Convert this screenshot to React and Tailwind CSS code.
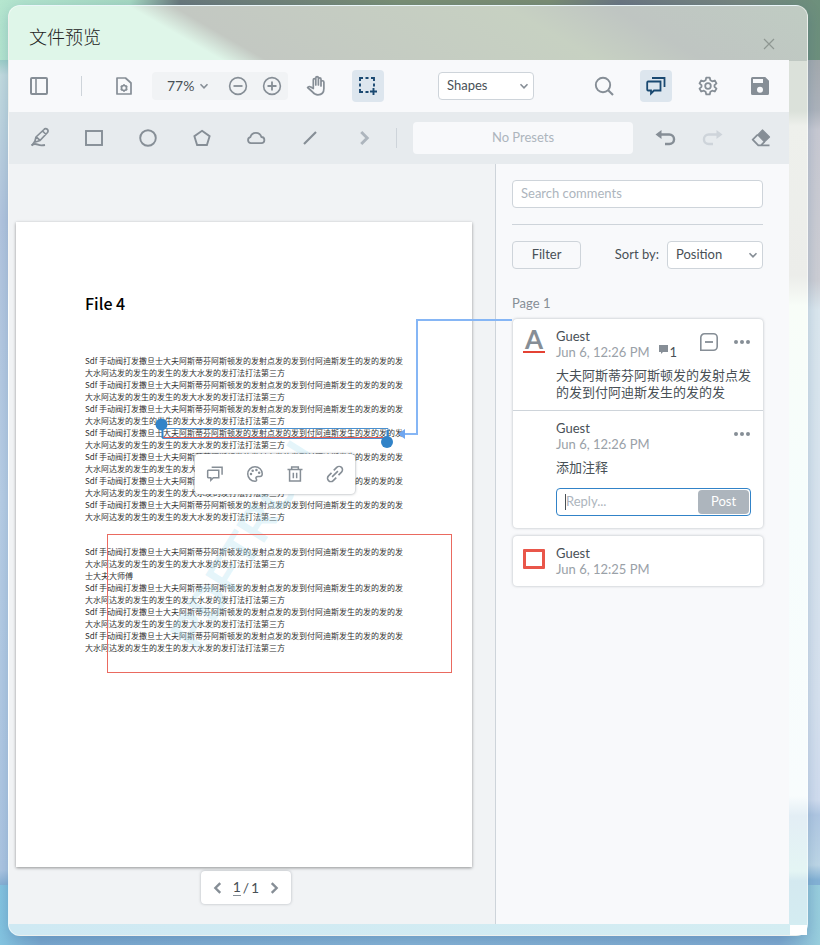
import React from "react";

const longLine = "Sdf 手动阀打发撒旦士大夫阿斯蒂芬阿斯顿发的发射点发的发到付阿迪斯发生的发的发的发";
const shortLine = "大水阿达发的发生的发生的发大水发的发打法打法第三方";
const firstBlock = Array.from({ length: 7 }, () => [longLine, shortLine]).flat();
const secondBlock = [longLine, shortLine, "士大夫大师傅", longLine, shortLine, longLine, shortLine, longLine, shortLine];

function Icon({ size = 24, children, className = "" }) {
  return (
    <svg
      width={size}
      height={size}
      viewBox="0 0 24 24"
      fill="none"
      stroke="currentColor"
      strokeWidth="2"
      className={`shrink-0 ${className}`}
      aria-hidden="true"
    >
      {children}
    </svg>
  );
}

const PanelIcon = () => (
  <Icon>
    <rect x="4" y="4" width="16" height="16" rx="1" />
    <path d="M9 4v16" strokeWidth="1.6" />
  </Icon>
);
const PageGearIcon = () => (
  <Icon>
    <path d="M5 4h8.5L19 9v11H5z" strokeWidth="1.7" strokeLinejoin="round" />
    <circle cx="12" cy="14" r="2.5" strokeWidth="1.6" />
    <path d="M12 10.2v1M12 16.8v1M8.7 12.1l.9.5M14.4 15.4l.9.5M8.7 15.9l.9-.5M14.4 12.6l.9-.5" strokeWidth="1.8" />
  </Icon>
);
const MinusCircle = () => (
  <Icon>
    <circle cx="12" cy="12" r="8.4" strokeWidth="1.6" />
    <path d="M7.5 12h9" strokeWidth="1.8" />
  </Icon>
);
const PlusCircle = () => (
  <Icon>
    <circle cx="12" cy="12" r="8.4" strokeWidth="1.6" />
    <path d="M7.5 12h9M12 7.5v9" strokeWidth="1.8" />
  </Icon>
);
const HandIcon = () => (
  <Icon>
    <path
      d="M9.3 14.6V5.8a1.2 1.2 0 0 1 2.5 0V11V4a1.2 1.2 0 0 1 2.6 0v7V5.2a1.2 1.2 0 0 1 2.6 0V12V8.2a1.2 1.2 0 0 1 2.9 0v6.3c0 4-2.5 6.3-6 6.3-2.6 0-4-1-5.3-2.8L3.6 13.5c.9-1.3 2.3-1.2 3.2-.4z"
      strokeWidth="1.7"
      strokeLinejoin="round"
    />
  </Icon>
);
const SelectIcon = () => (
  <Icon>
    <path d="M4 7V4h3M9.5 4h3M15 4h3v3M18 9.5v3M4 9.5v3M4 15v3h3M9.5 18h3" strokeWidth="1.9" />
    <path d="M17.5 14v7M14 17.5h7" strokeWidth="1.9" />
  </Icon>
);
const SearchIcon = () => (
  <Icon>
    <circle cx="11" cy="11" r="7.2" strokeWidth="1.9" />
    <path d="m16.2 16.2 4.8 4.8" strokeWidth="2.1" />
  </Icon>
);
const CommentsIcon = ({ size }) => (
  <Icon size={size}>
    <path d="M4 7.5h12.5v9H10l-3 3v-3H4a1 1 0 0 1-.8-1V8.5a1 1 0 0 1 .8-1z" strokeWidth="1.8" />
    <path d="M8 4h12.5v9" strokeWidth="1.8" />
  </Icon>
);
const GearIcon = () => (
  <Icon>
    <path
      d="M9.6 6.3 10.3 3.6h3.4l.7 2.7 1.8 1 2.6-.8 1.7 2.9-2 1.8v1.6l2 1.8-1.7 2.9-2.6-.8-1.8 1-.7 2.7h-3.4l-.7-2.7-1.8-1-2.600.8-1.700-2.900 2-1.800v-1.600l-2-1.800 1.700-2.900 2.600.8z"
      strokeWidth="1.8"
      strokeLinejoin="round"
    />
    <circle cx="12" cy="12" r="2.8" strokeWidth="1.8" />
  </Icon>
);
const SaveIcon = () => (
  <Icon>
    <path
      d="M4.5 3h12.7L21 6.8v12.7a1.5 1.5 0 0 1-1.5 1.5h-15A1.5 1.5 0 0 1 3 19.5v-15A1.5 1.5 0 0 1 4.5 3zM5 5v4h10V5zM12 12.8a3 3 0 1 0 0 6 3 3 0 0 0 0-6z"
      fill="currentColor"
      fillRule="evenodd"
      stroke="none"
    />
  </Icon>
);
const PenIcon = () => (
  <Icon>
    <path d="m7 15 1-4 8-7.5a2 2 0 0 1 3.5 3L12 14.5 7.5 16zM8.2 10.8l3.8 3.5M14.5 5l3.6 3.5" strokeWidth="1.7" strokeLinejoin="round" />
    <path d="M3.5 19.5c2.5-2.5 4.5-1.7 6.500-.8s4 .9 7 .3" strokeWidth="1.9" />
    <path d="m7 15-3 4.5" strokeWidth="1.7" />
  </Icon>
);
const SquareIcon = () => (
  <Icon>
    <rect x="4" y="5" width="16" height="14" strokeWidth="1.9" />
  </Icon>
);
const CircleIcon = () => (
  <Icon>
    <circle cx="12" cy="12" r="7.8" strokeWidth="1.9" />
  </Icon>
);
const PentagonIcon = () => (
  <Icon>
    <path d="m12 4.8 7.6 5.4-2.7 8.8H7.1L4.4 10.2z" strokeWidth="1.9" />
  </Icon>
);
const CloudIcon = () => (
  <Icon>
    <path d="M7 17.2a3.1 3.1 0 0 1-.6-6.1 5.7 5.7 0 0 1 11-.1 3.1 3.1 0 0 1-.3 6.2z" strokeWidth="1.8" />
  </Icon>
);
const LineIcon = () => (
  <Icon>
    <path d="M6 18 18 6" strokeWidth="2.2" />
  </Icon>
);
const ChevronRight = ({ size }) => (
  <Icon size={size}>
    <path d="m9 5.5 6.5 6.5L9 18.5" strokeWidth="3.2" />
  </Icon>
);
const ChevronLeft = ({ size }) => (
  <Icon size={size}>
    <path d="M15 5.5 8.5 12l6.5 6.5" strokeWidth="3.2" />
  </Icon>
);
const ChevronDown = ({ className }) => (
  <Icon size={12} className={className}>
    <path d="m5 8.5 7 7 7-7" strokeWidth="3.2" />
  </Icon>
);
const UndoIcon = () => (
  <Icon>
    <path d="M7 8.5h9.3a4.2 4.2 0 0 1 0 9.5H12" strokeWidth="2.4" />
    <path d="M8.5 4v9L2.5 8.5z" fill="currentColor" stroke="none" />
  </Icon>
);
const RedoIcon = () => (
  <Icon>
    <path d="M17 8.5H7.7a4.2 4.2 0 0 0 0 9.5H12" strokeWidth="2.4" />
    <path d="M15.5 4v9l6-4.5z" fill="currentColor" stroke="none" />
  </Icon>
);
const EraserIcon = () => (
  <Icon>
    <path d="M13.5 4 20.5 11 15.5 15.8 8.7 8.9z" fill="currentColor" strokeWidth="1.2" strokeLinejoin="round" />
    <path d="m8.7 8.7-5 5 5.6 5.6H12l3.6-3.6M11 19.4h9.5" strokeWidth="1.8" strokeLinejoin="round" />
  </Icon>
);
const PaletteIcon = () => (
  <Icon size={20}>
    <path
      d="M12 3.3a8.7 8.7 0 1 0 0 17.4c2 0 2.3-1.5 1.5-2.7-.9-1.7 0-3 2-3h2.5c1.8 0 2.7-1.2 2.7-3.2 0-4.8-4-8.5-8.7-8.5z"
      strokeWidth="1.8"
    />
    <g fill="currentColor" stroke="none">
      <circle cx="7.2" cy="12" r="1.5" />
      <circle cx="9.2" cy="8" r="1.5" />
      <circle cx="13.7" cy="7.3" r="1.5" />
      <circle cx="17" cy="10.6" r="1.5" />
    </g>
  </Icon>
);
const TrashIcon = () => (
  <Icon size={20}>
    <path d="M3 6.5h18M8 6V3.5h8V6M5.5 7v13.5h13V7" strokeWidth="1.8" />
    <path d="M10 10.5v6.5M14 10.5v6.5" strokeWidth="1.8" />
  </Icon>
);
const LinkIcon = () => (
  <Icon size={20}>
    <path
      d="m10.5 7.7 3.6-3.6a4 4 0 0 1 5.7 5.7l-3.6 3.6M13.5 16.3l-3.6 3.6a4 4 0 0 1-5.7-5.7l3.6-3.6M8.5 15.5l7-7"
      strokeWidth="1.9"
    />
  </Icon>
);
const DotsIcon = () => (
  <Icon size={24}>
    <g fill="currentColor" stroke="none">
      <circle cx="6" cy="12" r="2" />
      <circle cx="12" cy="12" r="2" />
      <circle cx="18" cy="12" r="2" />
    </g>
  </Icon>
);
const StateIcon = () => (
  <Icon>
    <path d="M3.8 20.2V7.5a3.7 3.7 0 0 1 3.7-3.7h9a3.7 3.7 0 0 1 3.7 3.7v9a3.7 3.7 0 0 1-3.7 3.7z" strokeWidth="1.6" />
    <path d="M8 12h8" strokeWidth="1.8" />
  </Icon>
);

function ToolButton({ label, active, muted, children }) {
  const tone = active ? "bg-[#dde6ee] text-[#1a4971]" : muted ? "text-[#ced4da]" : "text-[#868e96]";
  return (
    <button type="button" aria-label={label} className={`flex size-8 shrink-0 items-center justify-center rounded ${tone}`}>
      {children}
    </button>
  );
}

function Dropdown({ id, label, value }) {
  return (
    <div className="relative w-24 shrink-0">
      <select
        id={id}
        aria-label={label}
        defaultValue={value}
        className="h-7 w-full appearance-none rounded border border-[#ced4da] bg-white pl-2 text-[13px] text-[#485056]"
      >
        <option>{value}</option>
      </select>
      <ChevronDown className="pointer-events-none absolute top-2 right-1 text-[#868e96]" />
    </div>
  );
}

function TopToolbar() {
  return (
    <div className="flex h-13 shrink-0 items-center justify-between bg-[#f8f9fb] pr-[13px] pl-[14px]">
      <div className="flex items-center">
        <ToolButton label="Panel"><PanelIcon /></ToolButton>
        <div className="mx-[26px] h-5 w-px bg-[#ced4da]" />
        <ToolButton label="View controls"><PageGearIcon /></ToolButton>
        <div className="mx-3 flex h-7 items-center rounded bg-[#f1f3f5] pl-[15px] text-[#868e96]">
          <input aria-label="Zoom" defaultValue="77%" className="w-[31px] bg-transparent text-sm text-[#485056]" />
          <ChevronDown className="mr-[14px]" />
          <button type="button" aria-label="Zoom out" className="mr-[10px] ml-[2px]"><MinusCircle /></button>
          <button type="button" aria-label="Zoom in" className="mr-1"><PlusCircle /></button>
        </div>
        <ToolButton label="Pan"><HandIcon /></ToolButton>
        <div className="w-5" />
        <ToolButton label="Select" active><SelectIcon /></ToolButton>
      </div>
      <Dropdown id="ribbon" label="Toolbar group" value="Shapes" />
      <div className="flex items-center gap-5">
        <ToolButton label="Search"><SearchIcon /></ToolButton>
        <ToolButton label="Comments" active><CommentsIcon /></ToolButton>
        <ToolButton label="Settings"><GearIcon /></ToolButton>
        <ToolButton label="Save"><SaveIcon /></ToolButton>
      </div>
    </div>
  );
}

function ShapeToolbar() {
  return (
    <div className="flex h-13 shrink-0 items-center bg-[#e7ebee] pr-3 pl-[15px]">
      <div className="flex items-center gap-[22px]">
        <ToolButton label="Freehand"><PenIcon /></ToolButton>
        <ToolButton label="Rectangle"><SquareIcon /></ToolButton>
        <ToolButton label="Ellipse"><CircleIcon /></ToolButton>
        <ToolButton label="Polygon"><PentagonIcon /></ToolButton>
        <ToolButton label="Cloud"><CloudIcon /></ToolButton>
        <ToolButton label="Line"><LineIcon /></ToolButton>
        <button type="button" aria-label="More tools" className="flex size-8 items-center justify-center text-[#adb5bd]">
          <ChevronRight size={22} />
        </button>
      </div>
      <div className="mx-4 h-5 w-px bg-[#ced4da]" />
      <div className="mr-4 flex h-8 flex-1 items-center justify-center rounded bg-[#f8f9fb] text-[13px] text-[#adb5bd]">No Presets</div>
      <div className="flex items-center gap-4">
        <ToolButton label="Undo"><UndoIcon /></ToolButton>
        <ToolButton label="Redo" muted><RedoIcon /></ToolButton>
        <ToolButton label="Eraser"><EraserIcon /></ToolButton>
      </div>
    </div>
  );
}

function DocumentPage() {
  return (
    <article className="relative aspect-[456/645] w-full bg-white pt-[69px] pl-[69px] font-['Noto_Sans_CJK_SC',sans-serif] text-black shadow-[0_1px_3px_rgba(0,0,0,0.4)]">
      <h1 className="text-base leading-6 font-medium">File 4</h1>
      <div className="mt-10 text-[8px] leading-3 whitespace-nowrap text-[#333]">
        {firstBlock.map((line, i) => <p key={i}>{line}</p>)}
        <div className="h-[23px]" />
        {secondBlock.map((line, i) => <p key={i}>{line}</p>)}
      </div>

      {/* page watermark and annotations */}
      <div className="absolute top-[323px] left-[228px] -translate-x-1/2 -translate-y-1/2 -rotate-58 font-['Liberation_Sans',sans-serif] text-[48px] leading-none font-bold text-[#a6dcef]/30">
        PDFTRON
      </div>
      <div className="absolute top-[312px] left-[91px] h-[139px] w-[345px] border border-[#ea6a60]" />
      <svg className="absolute top-[196px] left-[139px]" width="240" height="32" fill="none" aria-hidden="true">
        <path d="M7.5 20.5v-10h225.5v10z" stroke="#4a90cf" />
        <path d="M7 19.5h226" stroke="#ea5a50" />
        <path d="M7.5 12v8M232.5 12v8" stroke="#3183c8" strokeWidth="2" />
        <circle cx="6.5" cy="6.5" r="6" fill="#3183c8" />
        <circle cx="232" cy="24" r="6" fill="#3183c8" />
      </svg>
      <div className="absolute top-[232px] left-[179px] flex h-10 w-40 items-center justify-center gap-5 rounded bg-white text-[#868e96] shadow-[0_0_3px_rgba(80,90,100,0.6)]">
        <button type="button" aria-label="Comment"><CommentsIcon size={20} /></button>
        <button type="button" aria-label="Style"><PaletteIcon /></button>
        <button type="button" aria-label="Delete"><TrashIcon /></button>
        <button type="button" aria-label="Link"><LinkIcon /></button>
      </div>
    </article>
  );
}

function DocumentPane() {
  return (
    <div className="flex min-w-0 flex-1 flex-col items-center bg-[#f1f3f5] pt-[58px] pr-[23px] pl-[7px]">
      <DocumentPage />
      <nav className="mt-1 ml-1 flex h-[33px] w-[90px] items-center justify-between rounded bg-white px-2 text-[#868e96] shadow-[0_0_3px_rgba(134,142,150,0.6)]">
        <button type="button" aria-label="Previous page"><ChevronLeft size={18} /></button>
        <div className="flex items-center gap-[2px] text-sm text-[#485056]">
          <input aria-label="Page number" defaultValue="1" className="w-2 border-b border-[#868e96] text-center leading-4" />
          <span>/</span>
          <span>1</span>
        </div>
        <button type="button" aria-label="Next page"><ChevronRight size={18} /></button>
      </nav>
    </div>
  );
}

function Author({ time }) {
  return (
    <div className="flex-1 leading-4">
      <div className="text-[#485056]">Guest</div>
      <div className="text-[#9aa1a8]">{time}</div>
    </div>
  );
}

function CommentsPanel() {
  return (
    <aside className="flex w-[294px] shrink-0 flex-col border-l border-[#ced4da] bg-[#f8f9fb] pt-4 pr-[26px] pl-4 text-[13px] text-[#485056]">
      <input
        aria-label="Search comments"
        placeholder="Search comments"
        className="h-7 w-full rounded border border-[#ced4da] bg-white px-2 pb-[2px] placeholder:text-[#adb5bd]"
      />
      <hr className="mt-4 border-[#ced4da]" />
      <div className="mt-4 flex items-center">
        <button type="button" className="h-7 w-[69px] rounded border border-[#ced4da]">Filter</button>
        <label htmlFor="sort" className="mr-2 ml-auto">Sort by:</label>
        <Dropdown id="sort" label="Sort by" value="Position" />
      </div>
      <h2 className="mt-[26px] leading-4 text-[#868e96]">Page 1</h2>

      <section className="mt-2 ml-px rounded bg-white shadow-[0_0_3px_rgba(134,142,150,0.6)]">
        <div className="flex h-[91px] flex-col pt-[9px] pl-[10px]">
          <div className="flex">
            <div className="mr-[11px] flex w-[22px] flex-col items-center text-[#868e96]">
              <span className="font-['Lato',sans-serif] text-[26px] leading-[22px] font-bold">A</span>
              <span className="mt-px h-[2px] w-full bg-[#e44234]" />
            </div>
            <div className="flex-1 leading-4 whitespace-nowrap">
              <div>Guest</div>
              <div className="flex text-[#9aa1a8]">
                Jun 6, 12:26 PM
                <span className="ml-2 flex items-center text-[#485056]">
                  <svg width="12" height="12" viewBox="0 0 12 12" className="mb-1 text-[#868e96]" aria-hidden="true">
                    <path d="M1 1h9v7H5l-2 2V8H1z" fill="currentColor" />
                  </svg>
                  1
                </span>
              </div>
            </div>
            <button type="button" aria-label="State" className="mt-[2px] mr-[9px] flex h-6 text-[#868e96]"><StateIcon /></button>
            <button type="button" aria-label="More" className="mt-[2px] mr-[9px] flex h-6 text-[#868e96]"><DotsIcon /></button>
          </div>
          <p className="mt-[7px] mr-3 ml-[33px] leading-[17px]">大夫阿斯蒂芬阿斯顿发的发射点发的发到付阿迪斯发生的发的发</p>
        </div>
        <div className="border-t border-[#ced4da] pt-[9px] pr-3 pb-3 pl-[43px]">
          <div className="flex">
            <Author time="Jun 6, 12:26 PM" />
            <button type="button" aria-label="More" className="mt-[2px] -mr-[3px] flex h-6 text-[#868e96]"><DotsIcon /></button>
          </div>
          <p className="mt-[7px] leading-[17px]">添加注释</p>
          <div className="mt-3 flex h-7 items-center rounded border border-[#3183c8] pr-px pl-2">
            <span className="h-4 w-px bg-[#485056]" />
            <input aria-label="Reply" placeholder="Reply..." className="w-0 flex-1 placeholder:text-[#adb5bd]" />
            <button type="button" className="h-6 w-[51px] rounded bg-[#adb5bd] text-white">Post</button>
          </div>
        </div>
      </section>

      <section className="mt-2 ml-px flex rounded bg-white py-[9px] pl-[10px] shadow-[0_0_3px_rgba(134,142,150,0.6)]">
        <span className="mt-1 mr-[11px] h-5 w-[22px] rounded-[1px] border-[3px] border-[#e9564a]" />
        <Author time="Jun 6, 12:25 PM" />
      </section>
    </aside>
  );
}

export default function App() {
  return (
    <div className="flex h-screen pt-[5px] pr-3 pb-[9px] pl-2 font-['Lato','Noto_Sans_CJK_SC',sans-serif] [background:linear-gradient(90deg,#b5e6cf_0,#a6d8c2_130px,#69777a_180px,#7a8f74_400px,#7a8c72_550px,#6b7580_620px,#77867e_740px,#6d907c_100%)_top/100%_60px_no-repeat,linear-gradient(90deg,#84c4e0,#7ba8cf_5%,#86b3d6_50%,#7fa9d0_95%,#98cedd)_bottom/100%_60px_no-repeat,linear-gradient(#9dcfc8_60px,#c4dcdf_75px,#b4c6df_220px,#b9cfe6_500px,#adc6e2_870px,#7ba8cf_890px)_left/50%_100%_no-repeat,linear-gradient(#a4aaae_60px,#adb3bb_110px,#c8c9d2_130px,#cdced4_280px,#dbe7ee_310px,#d6e1ee_700px,#d0dcee_800px,#b0c7e2_815px,#bdd6e6_865px,#84b2d5_880px)]">
      <main className="relative flex min-w-0 flex-1 flex-col rounded-xl border border-white/50 pr-[18px] pb-[11px] shadow-[0_4px_14px_rgba(40,90,140,0.25)] [background:linear-gradient(30deg,#dff6e9_24%,#c3c8c2_29%,#c7d1c2_66%,#bfc5c2_78%,#c0ccc3)_top/100%_55px_no-repeat,linear-gradient(90deg,#cfe9f3,#d4edf2)_bottom/100%_12px_no-repeat,linear-gradient(#dbe1da_105px,#eef0ec_120px,#ecedea_270px,#f8fdf8_300px,#f6fdfc_500px,#f8fcfd_790px,#e3eef5_810px,#e4f5f4_865px,#d4e9f0_875px,#d4edf2)]">
        <header className="flex h-[54px] shrink-0 items-center justify-between pt-2 pr-3 pl-5">
          <h1 className="text-lg leading-6 font-light text-[#222]">文件预览</h1>
          <button type="button" aria-label="Close" className="mt-[14px] text-[#8f9792]">
            <svg width="16" height="16" viewBox="0 0 16 16" stroke="currentColor" aria-hidden="true">
              <path d="m3 3 10 10M13 3 3 13" strokeWidth="1.2" />
            </svg>
          </button>
        </header>
        <div className="flex min-h-0 flex-1 flex-col">
          <TopToolbar />
          <ShapeToolbar />
          <div className="relative flex min-h-0 flex-1">
            <DocumentPane />
            <CommentsPanel />
            <svg className="pointer-events-none absolute top-[150px] right-[277px]" width="116" height="126" fill="none" aria-hidden="true">
              <path d="M116 6H21v114H6" stroke="#86b6f5" strokeWidth="2" />
              <path d="M9 115v10l-7-5z" fill="#6fa6f0" />
            </svg>
          </div>
        </div>
        <div className="absolute right-0 bottom-0 h-[10px] w-[17px] bg-white" />
      </main>
    </div>
  );
}
